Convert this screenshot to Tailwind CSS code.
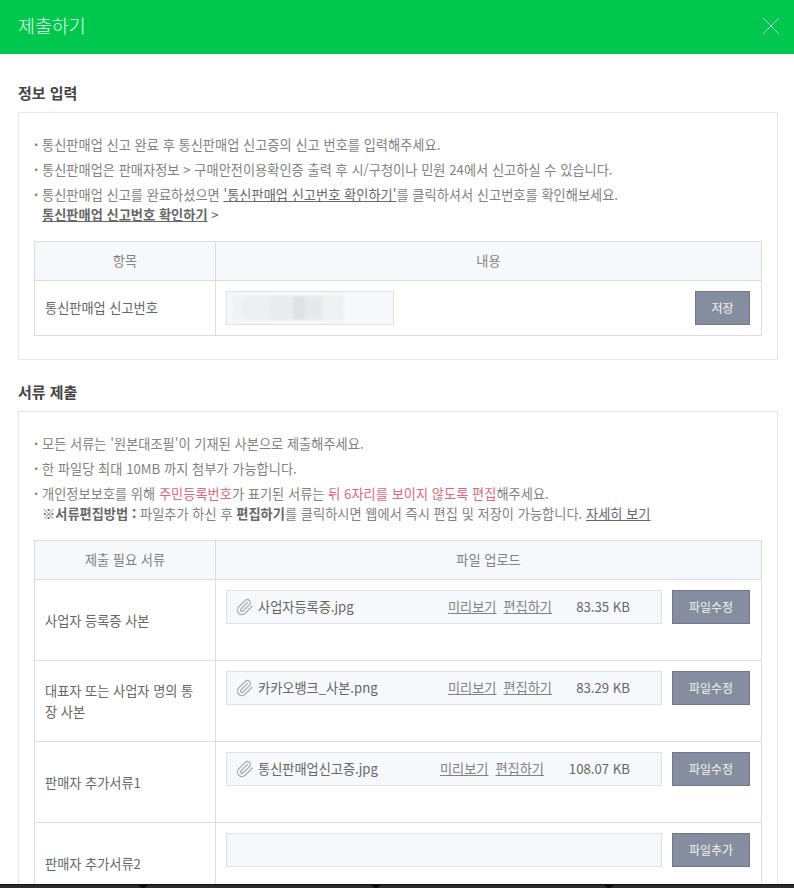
<!DOCTYPE html>
<html lang="ko">
<head>
  <meta charset="UTF-8" />
  <title>제출하기</title>
  <script src="https://cdn.jsdelivr.net/npm/@tailwindcss/browser@4"></script>
</head>
<body class="bg-white h-[888px] overflow-hidden relative font-['Noto_Sans_CJK_KR','Noto_Sans',sans-serif] text-[13.2px] text-[#818181]">

  <header class="h-[54px] bg-[#00c74d] flex items-center justify-between pl-[18px] pr-[15px] pb-[2px]">
    <h1 class="text-[18.4px] font-light text-white/90">제출하기</h1>
    <svg width="16" height="16" viewBox="0 0 16 16" fill="none" stroke="#fff" stroke-width="0.7"><path d="M0 0L16 16M16 0L0 16" /></svg>
  </header>

  <main class="pl-[18px] pr-[16px] pt-[28px]">
    <h2 class="text-[15px] leading-[22px] font-bold text-[#444] mb-[8px]">정보 입력</h2>
    <section class="border border-[#e3e6ec] h-[248px] px-[15px] pt-[22px]">
      <ul class="leading-[20px] tracking-[0.03px]">
        <li class="flex mb-[5px]"><span class="w-[8px] shrink-0 font-bold">·</span>통신판매업 신고 완료 후 통신판매업 신고증의 신고 번호를 입력해주세요.</li>
        <li class="flex mb-[5px]"><span class="w-[8px] shrink-0 font-bold">·</span>통신판매업은 판매자정보 &gt; 구매안전이용확인증 출력 후 시/구청이나 민원 24에서 신고하실 수 있습니다.</li>
        <li class="flex mb-[5px]"><span class="w-[8px] shrink-0 font-bold">·</span><span>통신판매업 신고를 완료하셨으면 <a class="underline text-[#666]">'통신판매업 신고번호 확인하기'</a>를 클릭하셔서 신고번호를 확인해보세요.<br /><a class="underline font-bold text-[#666]">통신판매업 신고번호 확인하기</a> <span class="text-[#666]">&gt;</span></span></li>
      </ul>
      <div class="mt-[16px] border border-[#dcdcdc] w-[728px]">
        <div class="flex h-[39px] bg-[#f7f8fb] border-b border-[#dcdcdc] text-center items-center">
          <div class="w-[181px] h-full border-r border-[#dcdcdc] flex items-center justify-center">항목</div>
          <div class="flex-1">내용</div>
        </div>
        <div class="flex h-[54px]">
          <div class="w-[181px] border-r border-[#dcdcdc] flex items-center pl-[10px] text-[#666]">통신판매업 신고번호</div>
          <div class="flex-1 flex items-center justify-between pl-[10px] pr-[11px]">
            <div class="w-[168px] h-[34px] border border-[#dfe2e8] bg-[#f7f8fb] flex items-center pl-[5px]">
              <div class="w-[112px] h-[24px] flex overflow-hidden blur-[1px]">
                <div class="w-[11px] bg-[#f0f1f4]"></div>
                <div class="w-[27px] bg-[#eceef1]"></div>
                <div class="w-[23px] bg-[#e9ebee]"></div>
                <div class="w-[12px] bg-[#dfe1e4]"></div>
                <div class="w-[17px] bg-[#e6e8eb]"></div>
                <div class="w-[22px] bg-[#eef0f2]"></div>
              </div>
            </div>
            <button class="w-[55px] h-[34px] bg-[#858d9f] border border-[#6f7789] text-white/90 text-[12px]">저장</button>
          </div>
        </div>
      </div>
    </section>

    <h2 class="mt-[21px] text-[15px] leading-[22px] font-bold text-[#444] mb-[8px]">서류 제출</h2>
    <section class="border border-[#e3e6ec] h-[600px] px-[15px] pt-[22px]">
      <ul class="leading-[20px] tracking-[0.03px]">
        <li class="flex mb-[5px]"><span class="w-[8px] shrink-0 font-bold">·</span>모든 서류는 '원본대조필'이 기재된 사본으로 제출해주세요.</li>
        <li class="flex mb-[5px]"><span class="w-[8px] shrink-0 font-bold">·</span>한 파일당 최대 10MB 까지 첨부가 가능합니다.</li>
        <li class="flex mb-[5px]"><span class="w-[8px] shrink-0 font-bold">·</span><span>개인정보보호를 위해 <b class="font-normal text-[#e2677a]">주민등록번호</b>가 표기된 서류는 <b class="font-normal text-[#e2677a]">뒤 6자리를 보이지 않도록 편집</b>해주세요.<br /><b class="text-[#666]">※서류편집방법 :</b> 파일추가 하신 후 <b class="text-[#666]">편집하기</b>를 클릭하시면 웹에서 즉시 편집 및 저장이 가능합니다. <a class="underline text-[#666]">자세히 보기</a></span></li>
      </ul>
      <div class="mt-[16px] border border-[#dcdcdc] w-[728px]">
        <div class="flex h-[39px] bg-[#f7f8fb] border-b border-[#dcdcdc] text-center items-center">
          <div class="w-[181px] h-full border-r border-[#dcdcdc] flex items-center justify-center">제출 필요 서류</div>
          <div class="flex-1">파일 업로드</div>
        </div>

        <div class="flex h-[81px] border-b border-[#dcdcdc]">
          <div class="w-[181px] border-r border-[#dcdcdc] flex items-center pl-[10px] pr-[15px] text-[#666] leading-[21px] break-all">사업자 등록증 사본</div>
          <div class="flex-1 flex justify-between pl-[10px] pr-[11px] pt-[10px]">
            <div class="w-[436px] h-[34px] border border-[#dfe2e8] bg-[#f7f8fb] flex items-center pl-[9px] pr-[31px] text-[#666]">
              <svg class="mr-[4px]" width="18" height="18" viewBox="0 0 24 24" fill="none" stroke="#a9aeb8" stroke-width="1.7" stroke-linecap="round" stroke-linejoin="round"><path d="m21.44 11.05-9.19 9.19a6 6 0 0 1-8.49-8.49l8.57-8.57A4 4 0 1 1 18 8.84l-8.59 8.57a2 2 0 0 1-2.83-2.83l8.49-8.48" /></svg>
              <span>사업자등록증.jpg</span>
              <a class="underline ml-auto text-[#818181]">미리보기</a><a class="underline ml-[7px] text-[#818181]">편집하기</a>
              <span class="w-[78px] text-right">83.35 KB</span>
            </div>
            <button class="w-[78px] h-[34px] bg-[#858d9f] border border-[#6f7789] text-white/90 text-[12px]">파일수정</button>
          </div>
        </div>

        <div class="flex h-[81px] border-b border-[#dcdcdc]">
          <div class="w-[181px] border-r border-[#dcdcdc] flex items-center pl-[10px] pr-[15px] text-[#666] leading-[21px] break-all">대표자 또는 사업자 명의 통장 사본</div>
          <div class="flex-1 flex justify-between pl-[10px] pr-[11px] pt-[10px]">
            <div class="w-[436px] h-[34px] border border-[#dfe2e8] bg-[#f7f8fb] flex items-center pl-[9px] pr-[31px] text-[#666]">
              <svg class="mr-[4px]" width="18" height="18" viewBox="0 0 24 24" fill="none" stroke="#a9aeb8" stroke-width="1.7" stroke-linecap="round" stroke-linejoin="round"><path d="m21.44 11.05-9.19 9.19a6 6 0 0 1-8.49-8.49l8.57-8.57A4 4 0 1 1 18 8.84l-8.59 8.57a2 2 0 0 1-2.83-2.83l8.49-8.48" /></svg>
              <span>카카오뱅크_사본.png</span>
              <a class="underline ml-auto text-[#818181]">미리보기</a><a class="underline ml-[7px] text-[#818181]">편집하기</a>
              <span class="w-[78px] text-right">83.29 KB</span>
            </div>
            <button class="w-[78px] h-[34px] bg-[#858d9f] border border-[#6f7789] text-white/90 text-[12px]">파일수정</button>
          </div>
        </div>

        <div class="flex h-[81px] border-b border-[#dcdcdc]">
          <div class="w-[181px] border-r border-[#dcdcdc] flex items-center pl-[10px] pr-[15px] text-[#666] leading-[21px] break-all">판매자 추가서류1</div>
          <div class="flex-1 flex justify-between pl-[10px] pr-[11px] pt-[10px]">
            <div class="w-[436px] h-[34px] border border-[#dfe2e8] bg-[#f7f8fb] flex items-center pl-[9px] pr-[31px] text-[#666]">
              <svg class="mr-[4px]" width="18" height="18" viewBox="0 0 24 24" fill="none" stroke="#a9aeb8" stroke-width="1.7" stroke-linecap="round" stroke-linejoin="round"><path d="m21.44 11.05-9.19 9.19a6 6 0 0 1-8.49-8.49l8.57-8.57A4 4 0 1 1 18 8.84l-8.59 8.57a2 2 0 0 1-2.83-2.83l8.49-8.48" /></svg>
              <span>통신판매업신고증.jpg</span>
              <a class="underline ml-auto text-[#818181]">미리보기</a><a class="underline ml-[7px] text-[#818181]">편집하기</a>
              <span class="w-[86px] text-right">108.07 KB</span>
            </div>
            <button class="w-[78px] h-[34px] bg-[#858d9f] border border-[#6f7789] text-white/90 text-[12px]">파일수정</button>
          </div>
        </div>

        <div class="flex h-[81px] border-b border-[#dcdcdc]">
          <div class="w-[181px] border-r border-[#dcdcdc] flex items-center pl-[10px] pr-[15px] text-[#666] leading-[21px] break-all">판매자 추가서류2</div>
          <div class="flex-1 flex justify-between pl-[10px] pr-[11px] pt-[10px]">
            <div class="w-[436px] h-[34px] border border-[#dfe2e8] bg-[#f7f8fb]"></div>
            <button class="w-[78px] h-[34px] bg-[#858d9f] border border-[#6f7789] text-white/90 text-[12px]">파일추가</button>
          </div>
        </div>
      </div>
    </section>
  </main>

  <!-- dark strip along the bottom edge -->
  <div class="absolute left-0 right-0 bottom-0 h-[4px] bg-[#2b2b2b] border-t border-[#111]">
    <svg class="absolute left-[138px] top-0" width="10" height="4" viewBox="0 0 10 4" fill="#0a0a0a"><path d="M0 0H10L5 4Z" /></svg>
    <svg class="absolute left-[371px] top-0" width="10" height="4" viewBox="0 0 10 4" fill="#0a0a0a"><path d="M0 0H10L5 4Z" /></svg>
    <svg class="absolute left-[604px] top-0" width="10" height="4" viewBox="0 0 10 4" fill="#0a0a0a"><path d="M0 0H10L5 4Z" /></svg>
  </div>
</body>
</html>
